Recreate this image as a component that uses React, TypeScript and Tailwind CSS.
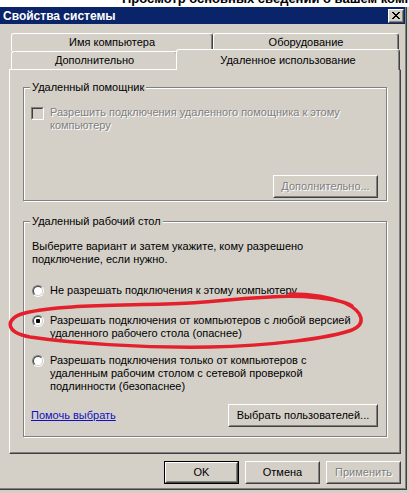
import React from "react";

const raisedOuter =
  "border border-t-white border-l-white border-r-[#404040] border-b-[#404040]";
const raisedInner =
  "border border-t-[#d4d0c8] border-l-[#d4d0c8] border-r-[#808080] border-b-[#808080]";

function Btn({
  className,
  children,
  disabled,
  def,
}: {
  className: string;
  children: React.ReactNode;
  disabled?: boolean;
  def?: boolean;
}) {
  const body = (
    <div className={`h-full ${raisedOuter}`}>
      <div
        className={`h-full flex items-center justify-center ${raisedInner} ${
          disabled ? "text-[#808080] [text-shadow:1px_1px_0_#ffffff]" : "text-black"
        }`}
      >
        {children}
      </div>
    </div>
  );
  if (def) {
    return <div className={`${className} border border-black`}>{body}</div>;
  }
  return <div className={className}>{body}</div>;
}

function Radio({ checked }: { checked?: boolean }) {
  return (
    <div className="mt-[1px] w-[12px] h-[12px] shrink-0 rounded-full border border-t-[#808080] border-l-[#808080] border-r-white border-b-white">
      <div className="w-full h-full rounded-full border border-t-[#404040] border-l-[#404040] border-r-[#d4d0c8] border-b-[#d4d0c8] bg-white flex items-center justify-center">
        {checked && <div className="w-[4px] h-[4px] bg-black rounded-[1px]" />}
      </div>
    </div>
  );
}

function CloseGlyph() {
  const rows = [
    "11000011",
    "01100110",
    "00111100",
    "00011000",
    "00111100",
    "01100110",
    "11000011",
  ];
  const rects: React.ReactNode[] = [];
  rows.forEach((r, y) =>
    r.split("").forEach((c, x) => {
      if (c === "1") rects.push(<rect key={`${x}-${y}`} x={x} y={y} width={1} height={1} fill="#000" />);
    })
  );
  return (
    <svg width="8" height="7" viewBox="0 0 8 7" shapeRendering="crispEdges">
      {rects}
    </svg>
  );
}

const tabBase =
  "border-l border-t border-r border-l-white border-t-white border-r-[#404040] rounded-t-[3px] shadow-[inset_-1px_0_0_#808080] bg-[#d4d0c8]";

export default function App() {
  return (
    <div className="relative w-[409px] h-[493px] overflow-hidden bg-[#d4d0c8] font-['Liberation_Sans',Arial,sans-serif] text-[11px] leading-[13px] text-black">
      {/* background window strip */}
      <div className="h-[7px] bg-white overflow-hidden">
        <div className="-mt-[8px] pl-[122px] whitespace-nowrap font-bold text-[13px] leading-[13px] text-black">
          Просмотр основных сведений о вашем компьютере
        </div>
      </div>

      {/* window */}
      <div className="w-[407px] h-[483px] border-r border-b border-r-[#404040] border-b-[#404040] shadow-[inset_-1px_-1px_0_#808080] flex flex-col">
        {/* title bar */}
        <div className="h-[17px] mr-[1px] bg-[#0a246a] flex items-center justify-between pl-[3px] pr-[1px]">
          <span className="text-white font-bold text-[12px] leading-[14px]">Свойства системы</span>
          <div className={`w-[16px] h-[14px] ${raisedOuter} bg-[#d4d0c8]`}>
            <div className={`w-full h-full ${raisedInner} flex items-center justify-center`}>
              <CloseGlyph />
            </div>
          </div>
        </div>

        {/* tabs back row */}
        <div className="mt-[9px] ml-[11px] flex h-[18px]">
          <div className={`w-[202px] h-[18px] ${tabBase} flex items-center justify-center`}>
            Имя компьютера
          </div>
          <div className={`w-[186px] h-[18px] ${tabBase} flex items-center justify-center`}>
            Оборудование
          </div>
        </div>
        {/* tabs front row */}
        <div className="ml-[11px] flex items-start h-[18px]">
          <div className={`w-[167px] h-[18px] ${tabBase} flex items-center justify-center`}>
            Дополнительно
          </div>
          <div className={`relative z-10 -ml-[2px] -mt-[2px] w-[224px] h-[21px] ${tabBase} pt-[4px] text-center`}>
            Удаленное использование
          </div>
        </div>

        {/* panel */}
        <div className="ml-[9px] w-[392px] h-[385px] border border-t-white border-l-white border-r-[#404040] border-b-[#404040] shadow-[inset_-1px_-1px_0_#808080] pt-[17px] px-[13px]">
          {/* group 1 */}
          <div className="h-[114px] border border-[#808080] shadow-[1px_1px_0_#ffffff,inset_1px_1px_0_#ffffff] flex flex-col">
            <div className="-mt-[7px] ml-[6px] flex">
              <span className="bg-[#d4d0c8] px-[2px] leading-[13px]">Удаленный помощник</span>
            </div>
            <div className="mt-[12px] pl-[7px] flex items-start gap-[6px]">
              <div className="mt-[1px] w-[13px] h-[13px] shrink-0 border border-t-[#808080] border-l-[#808080] border-r-white border-b-white">
                <div className="w-full h-full border border-t-[#404040] border-l-[#404040] border-r-[#d4d0c8] border-b-[#d4d0c8] bg-[#d4d0c8]" />
              </div>
              <div className="text-[#808080] [text-shadow:1px_1px_0_#ffffff] w-[300px]">
                Разрешить подключения удаленного помощника к этому компьютеру
              </div>
            </div>
            <div className="mt-[43px] pr-[8px] flex justify-end">
              <Btn className="w-[105px] h-[23px]" disabled>
                Дополнительно...
              </Btn>
            </div>
          </div>

          {/* group 2 */}
          <div className="mt-[20px] h-[216px] border border-[#808080] shadow-[1px_1px_0_#ffffff,inset_1px_1px_0_#ffffff] flex flex-col">
            <div className="-mt-[7px] ml-[6px] flex">
              <span className="bg-[#d4d0c8] px-[2px] leading-[13px]">Удаленный рабочий стол</span>
            </div>
            <div className="px-[8px] flex flex-col">
              <div className="mt-[12px] w-[300px]">
                Выберите вариант и затем укажите, кому разрешено подключение, если нужно.
              </div>
              <div className="mt-[18px] flex items-start gap-[6px]">
                <Radio />
                <div>Не разрешать подключения к этому компьютеру</div>
              </div>
              <div className="mt-[17px] flex items-start gap-[6px]">
                <Radio checked />
                <div className="w-[310px]">
                  Разрешать подключения от компьютеров с любой версией удаленного рабочего стола (опаснее)
                </div>
              </div>
              <div className="mt-[14px] flex items-start gap-[6px]">
                <Radio />
                <div className="w-[270px]">
                  Разрешать подключения только от компьютеров с удаленным рабочим столом с сетевой проверкой подлинности (безопаснее)
                </div>
              </div>
              <div className="mt-[11px] flex items-center justify-between">
                <span className="-ml-[1px] text-[#1010c0] underline">Помочь выбрать</span>
                <Btn className="w-[150px] h-[23px]">Выбрать пользователей...</Btn>
              </div>
            </div>
          </div>
        </div>

        {/* bottom buttons */}
        <div className="mt-[7px] ml-[164px] flex gap-[6px]">
          <Btn className="w-[75px] h-[23px]" def>
            OK
          </Btn>
          <Btn className="w-[75px] h-[23px]">Отмена</Btn>
          <Btn className="w-[75px] h-[23px]" disabled>
            Применить
          </Btn>
        </div>
      </div>

      {/* red annotation ellipse */}
      <svg
        className="absolute left-0 top-0 pointer-events-none"
        width="409"
        height="493"
        viewBox="0 0 409 493"
      >
        <path
          d="M 352 306 C 340 298, 300 295, 270 297 C 230 299, 210 302, 190 303 C 130 306, 60 304, 25 313 C 5 318, 4 332, 30 337 C 70 343, 140 348, 210 347 C 270 346, 330 338, 352 330 C 366 324, 364 312, 345 303 C 330 297, 310 294, 290 294"
          fill="none"
          stroke="#e3202b"
          strokeWidth="3.5"
          strokeLinecap="round"
          strokeLinejoin="round"
        />
      </svg>
    </div>
  );
}
